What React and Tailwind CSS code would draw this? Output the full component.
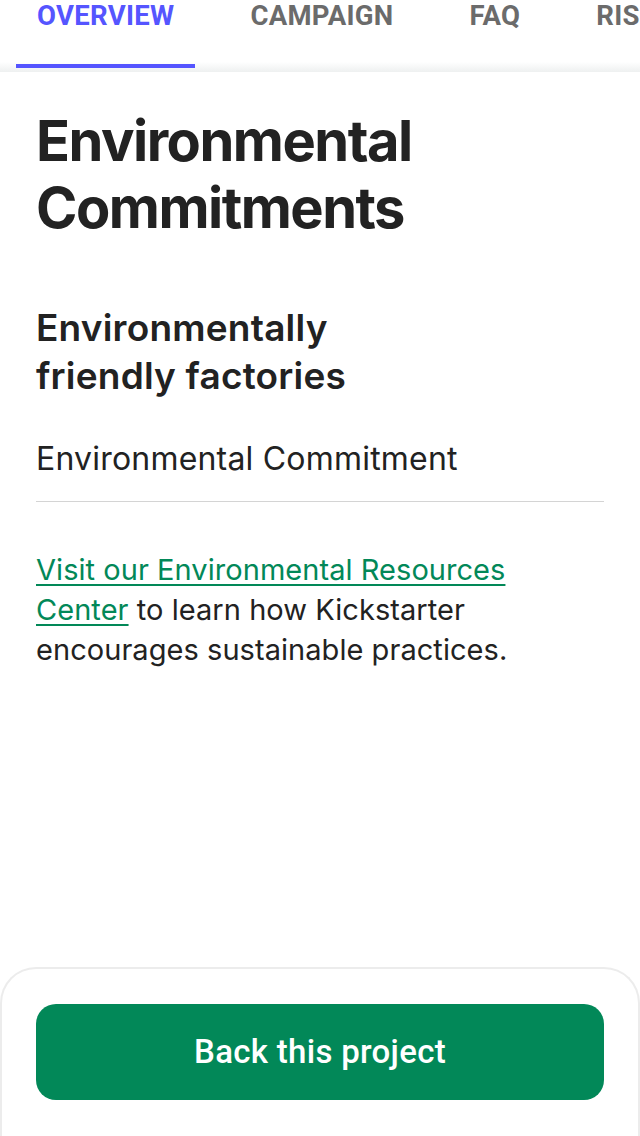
const tabs = ['OVERVIEW', 'CAMPAIGN', 'FAQ', 'RISKS']

function TabBar() {
  return (
    <div className="relative h-[72px] overflow-hidden bg-gradient-to-b from-white from-[86%] to-[#eef0f0]">
      <div className="flex gap-[34px] pl-[16px] whitespace-nowrap">
        {tabs.map((t, i) => (
          <div key={t} className="relative h-[68px] px-[21px] shrink-0">
            <span
              className={`block -mt-[2px] text-[27.5px] leading-[36px] tracking-[0.3px] font-bold font-['Roboto',sans-serif] ${
                i === 0 ? 'text-[#5555ff]' : 'text-[#6b6b6b]'
              }`}
            >
              {t}
            </span>
            {i === 0 && <div className="absolute left-0 right-0 top-[64px] h-[4px] bg-[#5555ff]" />}
          </div>
        ))}
      </div>
    </div>
  )
}

export default function App() {
  return (
    <div className="h-[1136px] w-[640px] flex flex-col overflow-hidden bg-white text-[#222222] font-['Inter',sans-serif]">
      <TabBar />

      {/* Content */}
      <div className="flex-1 px-[36px] pt-[36px]">
        <h1 className="text-[56px] leading-[67px] font-bold tracking-[-1.5px]">
          Environmental
          <br />
          Commitments
        </h1>

        <h2 className="mt-[62px] text-[37px] leading-[48px] font-semibold tracking-[0.2px]">
          Environmentally
          <br />
          friendly factories
        </h2>

        <p className="mt-[39px] text-[32px] leading-[40px] tracking-[0.2px]">Environmental Commitment</p>

        <div className="mt-[22px] h-px bg-[#d4d4d4]" />

        <p className="mt-[48px] text-[29px] leading-[40px] tracking-[0.05px]">
          <a className="text-[#028858] underline decoration-[2px] underline-offset-[4px]">
            Visit our Environmental Resources Center
          </a>{' '}
          to learn how Kickstarter encourages sustainable practices.
        </p>
      </div>

      {/* Bottom sheet */}
      <div className="h-[169px] rounded-t-[36px] border-t-2 border-x-2 border-[#ececec] bg-white px-[34px] pt-[35px]">
        <button className="w-full h-[96px] rounded-[20px] bg-[#028858] text-white text-[33px] tracking-[0.3px] font-medium font-['Roboto',sans-serif]">
          Back this project
        </button>
      </div>
    </div>
  )
}
